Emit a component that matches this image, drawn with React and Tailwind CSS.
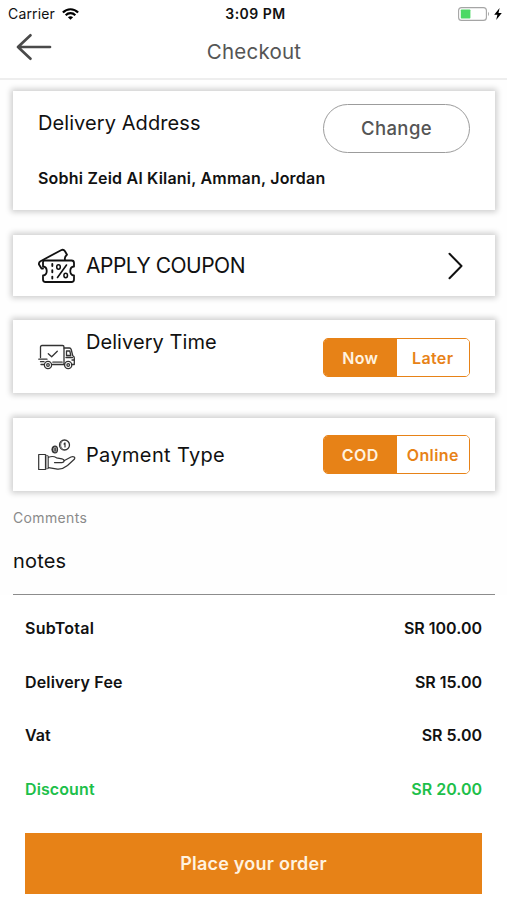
import React, { useState } from "react";

const totals = [
  { label: "SubTotal", value: "SR 100.00", labelClass: "tracking-[0.25px]" },
  { label: "Delivery Fee", value: "SR 15.00", labelClass: "tracking-[0.15px]" },
  { label: "Vat", value: "SR 5.00", labelClass: "tracking-[0px]" },
  { label: "Discount", value: "SR 20.00", green: true, labelClass: "tracking-[0.1px]" },
];

function StatusBar() {
  return (
    <div className="h-[27px] grid grid-cols-3 items-center pl-2 pr-[5px] text-[14px] leading-none text-[#111]">
      <div className="flex items-center gap-[7px]">
        <span className="tracking-[0.15px]">Carrier</span>
        <svg width="17" height="12" viewBox="0 0 17 12" fill="none" stroke="#000" strokeWidth="2.2">
          <path d="M0.9 4.6C5.2 0.1 11.8 0.1 16.1 4.6" />
          <path d="M3.7 7.3C6.4 4.5 10.6 4.5 13.3 7.3" />
          <path d="M8.5 11.8L5.9 9.2C7.4 7.8 9.6 7.8 11.1 9.2Z" fill="#000" stroke="none" />
        </svg>
      </div>
      <span className="pl-px text-center font-semibold tracking-[0.5px]">3:09 PM</span>
      <div className="flex items-center justify-end gap-[4px]">
        <svg width="32" height="14" viewBox="0 0 32 14">
          <rect x="0.6" y="0.6" width="27.8" height="12.8" rx="3" fill="#fff" stroke="#a5a5a5" strokeWidth="1.1" />
          <rect x="2.8" y="2.5" width="9.6" height="9" rx="0.8" fill="#4cd964" />
          <path d="M30 4.8Q32 7 30 9.2Z" fill="#a5a5a5" />
        </svg>
        <svg width="8" height="12" viewBox="0 0 8 12">
          <path d="M5.6 0L0.2 6.8H3.4L2.2 12L7.8 4.9H4.5Z" fill="#000" />
        </svg>
      </div>
    </div>
  );
}

function Card({ className, children }) {
  return (
    <div className={`bg-white shadow-[0_0_6px_2px_rgba(0,0,0,0.2)] flex pl-[25px] pr-[25px] ${className}`}>
      {children}
    </div>
  );
}

function Toggle({ options, textClass }) {
  const [selected, setSelected] = useState(options[0]);

  return (
    <div className="w-[147px] h-[39px] flex rounded-[5px] border-[1.5px] border-[#e78217] overflow-hidden">
      {options.map((option) => (
        <button
          key={option}
          type="button"
          onClick={() => setSelected(option)}
          className={`flex-1 text-[16px] leading-none font-semibold cursor-pointer ${textClass} ${
            selected === option ? "bg-[#e78217] text-[#fff3e0]" : "bg-white text-[#e78217]"
          }`}
        >
          {option}
        </button>
      ))}
    </div>
  );
}

function CouponIcon() {
  return (
    <svg width="38" height="36" viewBox="0 0 38 36" fill="none" stroke="#111" strokeWidth="1.8" strokeLinejoin="round" strokeLinecap="round">
      <path d="M6.5 12.5H33.5Q36 12.5 36 15V18.5C31 19 31 27 36 27.5V31.5Q36 34 33.5 34H7.5Q5 34 5 31.5V27.5C10 27 10 19 5 18.5V14Q5 12.5 6.5 12.5Z" />
      <path d="M5 20.5H3.5L1 16.5Q0.5 14.5 2.5 13.2L23 2.2Q25.5 1 27 3.2L29 6.7C26.5 8.5 26.5 10 27 12" />
      <path d="M14.3 16V31" strokeDasharray="2 4.3" strokeWidth="1.9" />
      <path d="M28.5 17L19.5 29.5" strokeWidth="1.6" />
      <ellipse cx="20.5" cy="19" rx="1.8" ry="2.2" strokeWidth="1.5" />
      <ellipse cx="27.7" cy="27.5" rx="1.8" ry="2.2" strokeWidth="1.5" />
    </svg>
  );
}

function TruckIcon() {
  return (
    <svg width="38" height="26" viewBox="0 0 38 26" fill="none" stroke="#333" strokeWidth="1.3" strokeLinejoin="round" strokeLinecap="round">
      <path d="M2.5 13.5V3Q2.5 1.5 4 1.5H24.5Q26 1.5 26 3V20.5H14.5" />
      <path d="M26 4H31.5Q32.7 4 33.2 5.5L34.7 11.5Q36.3 12.5 36.3 14V20.5H33.5M26 20.5H26.5" />
      <path d="M28.5 11.5V7H31.8L32.8 11.5ZM28 13.5H34.5M34 16H36M0.8 15.2H9M2.5 17.7H6M3 20.5H6" />
      <path d="M15 18.2H24" strokeWidth="1.7" stroke="#777" />
      <path d="M10.3 9.7L13.7 12.8L19.3 7.2" />
      <circle cx="10" cy="21" r="3.6" />
      <circle cx="10" cy="21" r="1.3" />
      <circle cx="30.2" cy="21" r="3.6" />
      <circle cx="30.2" cy="21" r="1.3" />
    </svg>
  );
}

function PaymentIcon() {
  return (
    <svg width="38" height="32" viewBox="0 0 38 32" fill="none" stroke="#333" strokeWidth="1.2" strokeLinejoin="round" strokeLinecap="round">
      <path d="M0.7 15.5H7.5V30.5H0.7Z" />
      <path d="M7.5 16L10.5 17V29.5L7.5 30M9 16.5V29.5" strokeWidth="0.9" stroke="#555" />
      <path d="M10.5 18.3C13 17.3 16 17.2 18.5 18.8L24 19.8C27 20.3 26.8 23.5 24 23.6H16.5" />
      <path d="M26 21.8L33 18C35.5 16.8 37.8 18.3 36.3 20.3L29.5 26.5C26 29.3 22 30.7 18 29.8L10.5 28.7" />
      <circle cx="26.5" cy="6" r="5" strokeWidth="1.3" />
      <path d="M24 2.4C22 4.500 22 8 24.300 10" stroke="#777" />
      <path d="M27 4V8M26.100 5L27 4" />
      <ellipse cx="17" cy="10.5" rx="2.5" ry="3.4" fill="#aaa" />
      <path d="M15.500 7.800C13.500 9 13.500 12 15.500 13.400M17.100 9V12" />
    </svg>
  );
}

function App() {
  return (
    <div className="w-[507px] h-[900px] bg-white overflow-hidden text-[#111] font-['Inter','Liberation_Sans',sans-serif]">
      <StatusBar />

      <header className="h-[53px] border-b-2 border-[#eee] grid grid-cols-[110px_1fr_110px]">
        <button type="button" className="self-start mt-[6px] ml-4 w-9 cursor-pointer">
          <svg width="36" height="28" viewBox="0 0 36 28" fill="none" stroke="#4a4a4a" strokeWidth="2.7" strokeLinecap="round" strokeLinejoin="round">
            <path d="M34 14H2M14.5 2.3L2 14L14.5 25.7" />
          </svg>
        </button>
        <h1 className="pt-[12px] pl-px text-center text-[20.5px] leading-[26px] tracking-[0.2px] text-[#555]">Checkout</h1>
      </header>

      <main className="bg-[#fefefe] px-[13px] pr-[12px] pt-[11px] flex flex-col">
        <Card className="h-[119px] flex-col">
          <div className="flex justify-between pt-[13px]">
            <h2 className="pt-[6px] text-[20px] leading-[26px] tracking-[0.08px]">Delivery Address</h2>
            <button
              type="button"
              className="w-[147px] h-[49px] rounded-full border border-[#9c9c9c] text-[18.5px] leading-none font-medium tracking-[0.4px] text-[#555] cursor-pointer"
            >
              Change
            </button>
          </div>
          <p className="mt-[15px] text-[16px] leading-5 font-semibold tracking-[0.21px] whitespace-nowrap">
            Sobhi Zeid Al Kilani, Amman, Jordan
          </p>
        </Card>

        <Card className="mt-[25px] h-[61px] items-center">
          <CouponIcon />
          <h2 className="ml-[10px] grow text-[21px] leading-[26px] tracking-[-0.5px]">APPLY COUPON</h2>
          <svg className="mr-[7px]" width="15" height="28" viewBox="0 0 15 28" fill="none" stroke="#111" strokeWidth="2" strokeLinecap="round" strokeLinejoin="round">
            <path d="M1.5 1.8L13.5 14L1.5 26.2" />
          </svg>
        </Card>

        <Card className="mt-[24px] h-[73px]">
          <div className="pt-[24px]">
            <TruckIcon />
          </div>
          <h2 className="ml-[10px] pt-[9px] grow text-[20px] leading-[26px] tracking-[0.06px]">Delivery Time</h2>
          <div className="pt-[18px]">
            <Toggle options={["Now", "Later"]} textClass="tracking-[0.35px]" />
          </div>
        </Card>

        <Card className="mt-[25px] h-[73px] items-center">
          <PaymentIcon />
          <h2 className="ml-[10px] grow text-[20px] leading-[26px] tracking-[0.35px]">Payment Type</h2>
          <Toggle options={["COD", "Online"]} textClass="tracking-[0.4px]" />
        </Card>

        <div className="mt-[18px] h-[86px] border-b-[1.5px] border-[#8c8c8c]">
          <p className="text-[14px] leading-[18px] tracking-[0.35px] text-[#8a8a8a]">Comments</p>
          <p className="mt-[21px] text-[20px] leading-[26px] tracking-[0.2px]">notes</p>
        </div>
      </main>

      <section className="px-[25px] pt-[6px]">
        {totals.map((row) => (
          <div
            key={row.label}
            className={`h-[53.75px] flex items-center justify-between text-[16px] leading-5 font-semibold ${
              row.green ? "text-[#1dbf4a]" : ""
            }`}
          >
            <span className={row.labelClass}>{row.label}</span>
            <span>{row.value}</span>
          </div>
        ))}
        <button
          type="button"
          className="mt-[17px] w-full h-[61px] bg-[#e78217] text-[#fff3e0] text-[18px] leading-none font-semibold tracking-[0.23px] cursor-pointer"
        >
          Place your order
        </button>
      </section>
    </div>
  );
}

export default App;
